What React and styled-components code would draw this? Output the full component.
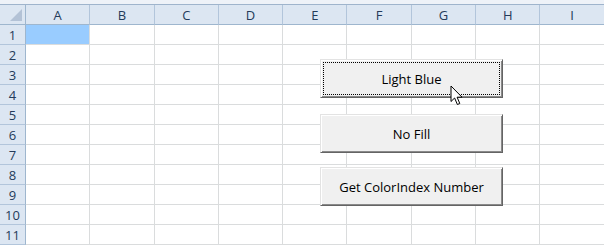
import React from 'react';
import styled, { createGlobalStyle } from 'styled-components';

const columns = ['A', 'B', 'C', 'D', 'E', 'F', 'G', 'H', 'I'];
const rows = [1, 2, 3, 4, 5, 6, 7, 8, 9, 10, 11];

const buttons = [
    { label: 'Light Blue', top: 59, focused: true },
    { label: 'No Fill', top: 114 },
    { label: 'Get ColorIndex Number', top: 167 },
];

export default function App() {
    return (
        <Page>
            <GlobalStyle />
            <TopStrip />
            <Sheet>
                <Corner>
                    <svg width="12" height="12" viewBox="0 0 12 12">
                        <polygon points="12,0 12,12 0,12" fill="#b3c2d6" />
                    </svg>
                </Corner>
                {columns.map((c) => (
                    <ColHeader key={c}>{c}</ColHeader>
                ))}
                {rows.map((r) => (
                    <React.Fragment key={r}>
                        <RowHeader>{r}</RowHeader>
                        {columns.map((c) => (
                            <Cell key={c} $fill={r === 1 && c === 'A' ? '#99ccff' : '#fff'} />
                        ))}
                    </React.Fragment>
                ))}
            </Sheet>
            {buttons.map((b) => (
                <FormButton key={b.label} $top={b.top} $focused={b.focused}>
                    {b.label}
                </FormButton>
            ))}
            <Cursor width="14" height="21" viewBox="0 0 14 21">
                <path
                    d="M1 1 L1 16.5 L4.6 13 L7.4 19.5 L9.8 18.5 L7.1 12.2 L12 12.2 Z"
                    fill="#fff"
                    stroke="#000"
                    strokeWidth="1"
                    strokeLinejoin="miter"
                />
            </Cursor>
        </Page>
    );
}

const GlobalStyle = createGlobalStyle`
    html, body {
        margin: 0;
        padding: 0;
        background: #fff;
        overflow: hidden;
    }
`;

const Page = styled.div`
    position: relative;
    width: 604px;
    height: 245px;
    overflow: hidden;
    font-family: "Open Sans", "Liberation Sans", sans-serif;
`;

const TopStrip = styled.div`
    height: 4px;
    background: #eef2f8;
    border-bottom: 1px solid #9fb4cc;
`;

const Sheet = styled.div`
    display: grid;
    grid-template-columns: 26px repeat(9, 64.3px);
    grid-template-rows: 20px repeat(11, 20px);
    width: 605px;
`;

const HeaderBase = styled.div`
    box-sizing: border-box;
    display: flex;
    align-items: center;
    justify-content: center;
    background: #dce6f2;
    color: #243b5a;
    font-size: 13px;
    line-height: 1;
`;

const Corner = styled(HeaderBase)`
    align-items: flex-end;
    justify-content: flex-end;
    padding: 0 3px 3px 0;
    border-right: 1px solid #9eb6ce;
    border-bottom: 1px solid #9eb6ce;
`;

const ColHeader = styled(HeaderBase)`
    border-right: 1px solid #b2c5db;
    border-bottom: 1px solid #9eb6ce;
    padding-top: 1px;
`;

const RowHeader = styled(HeaderBase)`
    border-right: 1px solid #9eb6ce;
    border-bottom: 1px solid #b2c5db;
    padding-top: 1px;
`;

const Cell = styled.div`
    box-sizing: border-box;
    background: ${(p) => p.$fill};
    border-right: 1px solid #dadcdd;
    border-bottom: 1px solid #dadcdd;
`;

const FormButton = styled.div`
    position: absolute;
    left: 320px;
    top: ${(p) => p.$top}px;
    box-sizing: border-box;
    width: 183px;
    height: 39px;
    display: flex;
    align-items: center;
    justify-content: center;
    background: #f0f0f0;
    border-top: 1px solid #e3e3e3;
    border-left: 1px solid #e3e3e3;
    border-right: 1px solid #646464;
    border-bottom: 1px solid #646464;
    box-shadow: inset 1px 1px 0 #fff, inset -1px -1px 0 #8a8a8a;
    color: #000;
    font-size: 13px;
    outline: ${(p) => (p.$focused ? '1px dotted #000' : 'none')};
    outline-offset: -4px;
`;

const Cursor = styled.svg`
    position: absolute;
    left: 450px;
    top: 85px;
`;
